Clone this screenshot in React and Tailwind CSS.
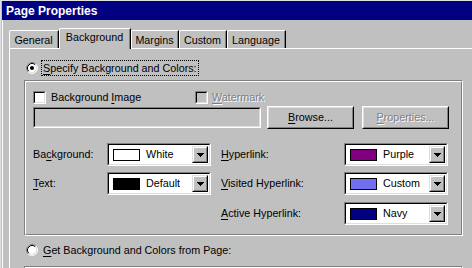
import React from "react";

const Arrow = () => (
  <svg width="7" height="4" viewBox="0 0 7 4" shapeRendering="crispEdges">
    <path d="M0 0h7v1H0zM1 1h5v1H1zM2 2h3v1H2zM3 3h1v1H3z" fill="#000" />
  </svg>
);

const Radio = ({ checked }) => (
  <svg width="12" height="12" viewBox="0 0 12 12">
    <circle cx="6" cy="6" r="5" fill="#fff" />
    <path d="M2.11 9.89A5.5 5.5 0 0 1 9.89 2.11" stroke="#808080" strokeWidth="1" fill="none" />
    <path d="M9.89 2.11A5.5 5.5 0 0 1 2.11 9.89" stroke="#fff" strokeWidth="1" fill="none" />
    <path d="M2.82 9.18A4.5 4.5 0 0 1 9.18 2.82" stroke="#000" strokeWidth="1" fill="none" />
    <path d="M9.18 2.82A4.5 4.5 0 0 1 2.82 9.18" stroke="#dfdfdf" strokeWidth="1" fill="none" />
    {checked && <circle cx="6" cy="6" r="2" fill="#000" />}
  </svg>
);

const Check = ({ disabled }) => (
  <div className="w-[13px] h-[13px] border border-t-[#808080] border-l-[#808080] border-r-white border-b-white">
    <div
      className={`w-full h-full border border-t-black border-l-black border-r-[#dfdfdf] border-b-[#dfdfdf] ${
        disabled ? "bg-[#c0c0c0]" : "bg-white"
      }`}
    />
  </div>
);

const Button = ({ children, disabled }) => (
  <div className="w-[87px] h-[23px] border border-t-white border-l-white border-r-black border-b-black">
    <div
      className={`w-full h-full border border-t-[#dfdfdf] border-l-[#dfdfdf] border-r-[#808080] border-b-[#808080] flex items-center justify-center ${
        disabled ? "text-[#808080] [text-shadow:1px_1px_0_#fff]" : ""
      }`}
    >
      {children}
    </div>
  </div>
);

const Combo = ({ swatch, label }) => (
  <div className="w-[104px] h-[23px] border border-t-[#808080] border-l-[#808080] border-r-white border-b-white">
    <div className="w-full h-full border border-t-black border-l-black border-r-[#dfdfdf] border-b-[#dfdfdf] bg-white flex items-center">
      <div className={`ml-[4px] w-[27px] h-[12px] border border-black ${swatch}`} />
      <span className="ml-[6px] flex-1 leading-none">{label}</span>
      <div className="mr-[1px] w-[16px] h-[17px] border border-t-[#dfdfdf] border-l-[#dfdfdf] border-r-black border-b-black">
        <div className="w-full h-full border border-t-white border-l-white border-r-[#808080] border-b-[#808080] bg-[#c0c0c0] flex items-center justify-center">
          <Arrow />
        </div>
      </div>
    </div>
  </div>
);

const Tab = ({ w, children }) => (
  <div className={`${w} h-[19px] flex flex-col`}>
    <div className="flex-1 border-l border-t border-white border-r border-r-black rounded-tl-[2px]">
      <div className="h-full border-r border-[#808080] flex justify-center pt-[3px] leading-[12px]">
        {children}
      </div>
    </div>
    <div className="h-[1px] bg-white" />
  </div>
);

const U = ({ children }) => <span className="underline underline-offset-[2px]">{children}</span>;

export default function App() {
  return (
    <div className="w-[472px] h-[268px] overflow-hidden bg-[#c0c0c0] font-['Liberation_Sans',Arial,Helvetica,sans-serif] text-[10.75px] text-black">
      <div className="h-full border-t border-l border-[#dfdfdf] pl-[1px]">
        <div className="h-full border-l border-white">
          {/* title bar */}
          <div className="h-[19px] bg-[#000080] flex items-center pl-[4px] -ml-[1px]">
            <span className="text-white font-bold text-[12px] leading-none">Page Properties</span>
          </div>
          {/* body */}
          <div className="pl-[6px] pt-[8px]">
            {/* tabs */}
            <div className="flex items-end h-[21px]">
              <Tab w="w-[50px]">General</Tab>
              <div className="w-[72px] h-[21px] border-l border-t border-white border-r border-r-black rounded-tl-[2px]">
                <div className="h-full border-r border-[#808080] flex justify-center pt-[2px] leading-[12px]">
                  Background
                </div>
              </div>
              <Tab w="w-[48px]">Margins</Tab>
              <Tab w="w-[48px]">Custom</Tab>
              <Tab w="w-[59px]">Language</Tab>
              <div className="flex-1 h-[1px] bg-white" />
            </div>
            {/* panel */}
            <div className="border-l border-white pl-[1px]">
              <div className="h-[11px]" />
              <div className="flex items-center h-[16px]">
                <div className="ml-[15px]">
                  <Radio checked />
                </div>
                <div className="ml-[3px] border border-dotted border-black px-[1px] leading-[14px]">
                  <U>S</U>pecify Background and Colors:
                </div>
              </div>
              {/* group box */}
              <div className="mt-[4px] ml-[13px] w-[439px] h-[156px] border border-t-[#808080] border-l-[#808080] border-r-white border-b-white">
                <div className="w-full h-full border border-t-white border-l-white border-r-[#808080] border-b-[#808080]">
                  <div className="flex items-center mt-[9px] h-[13px]">
                    <div className="ml-[7px] w-[162px] flex items-center">
                      <Check />
                      <span className="ml-[5px]">
                        Background <U>I</U>mage
                      </span>
                    </div>
                    <div className="flex items-center">
                      <Check disabled />
                      <span className="ml-[4px] text-[#808080] [text-shadow:1px_1px_0_#fff]">
                        <U>W</U>atermark
                      </span>
                    </div>
                  </div>
                  <div className="flex items-center mt-[2px] h-[23px]">
                    <div className="ml-[7px] w-[228px] h-[21px] border border-t-[#808080] border-l-[#808080] border-r-white border-b-white">
                      <div className="w-full h-full border border-t-black border-l-black border-r-[#dfdfdf] border-b-[#dfdfdf] bg-[#c0c0c0]" />
                    </div>
                    <div className="ml-[6px]">
                      <Button>
                        <U>B</U>rowse...
                      </Button>
                    </div>
                    <div className="ml-[8px]">
                      <Button disabled>
                        <U>P</U>roperties...
                      </Button>
                    </div>
                  </div>
                  <div className="flex items-center mt-[14px] h-[23px]">
                    <div className="ml-[7px] w-[74px]">
                      Ba<U>c</U>kground:
                    </div>
                    <Combo swatch="bg-white" label="White" />
                    <div className="ml-[10px] w-[123px]">
                      <U>H</U>yperlink:
                    </div>
                    <Combo swatch="bg-[#800080]" label="Purple" />
                  </div>
                  <div className="flex items-center mt-[6px] h-[23px]">
                    <div className="ml-[7px] w-[74px]">
                      <U>T</U>ext:
                    </div>
                    <Combo swatch="bg-black" label="Default" />
                    <div className="ml-[10px] w-[123px]">
                      <U>V</U>isited Hyperlink:
                    </div>
                    <Combo swatch="bg-[#7070f0]" label="Custom" />
                  </div>
                  <div className="flex items-center mt-[7px] h-[23px]">
                    <div className="ml-[7px] w-[74px]" />
                    <div className="w-[104px]" />
                    <div className="ml-[10px] w-[123px]">
                      <U>A</U>ctive Hyperlink:
                    </div>
                    <Combo swatch="bg-[#000080]" label="Navy" />
                  </div>
                </div>
              </div>
              <div className="flex items-center h-[16px] mt-[6px]">
                <div className="ml-[15px]">
                  <Radio />
                </div>
                <div className="ml-[5px] leading-[14px]">
                  <U>G</U>et Background and Colors from Page:
                </div>
              </div>
              <div className="mt-[8px] ml-[13px] w-[439px] h-[20px] border border-t-[#808080] border-l-[#808080] border-r-white border-b-white">
                <div className="w-full h-full border border-t-white border-l-white border-r-[#808080] border-b-[#808080]" />
              </div>
            </div>
          </div>
        </div>
      </div>
    </div>
  );
}
